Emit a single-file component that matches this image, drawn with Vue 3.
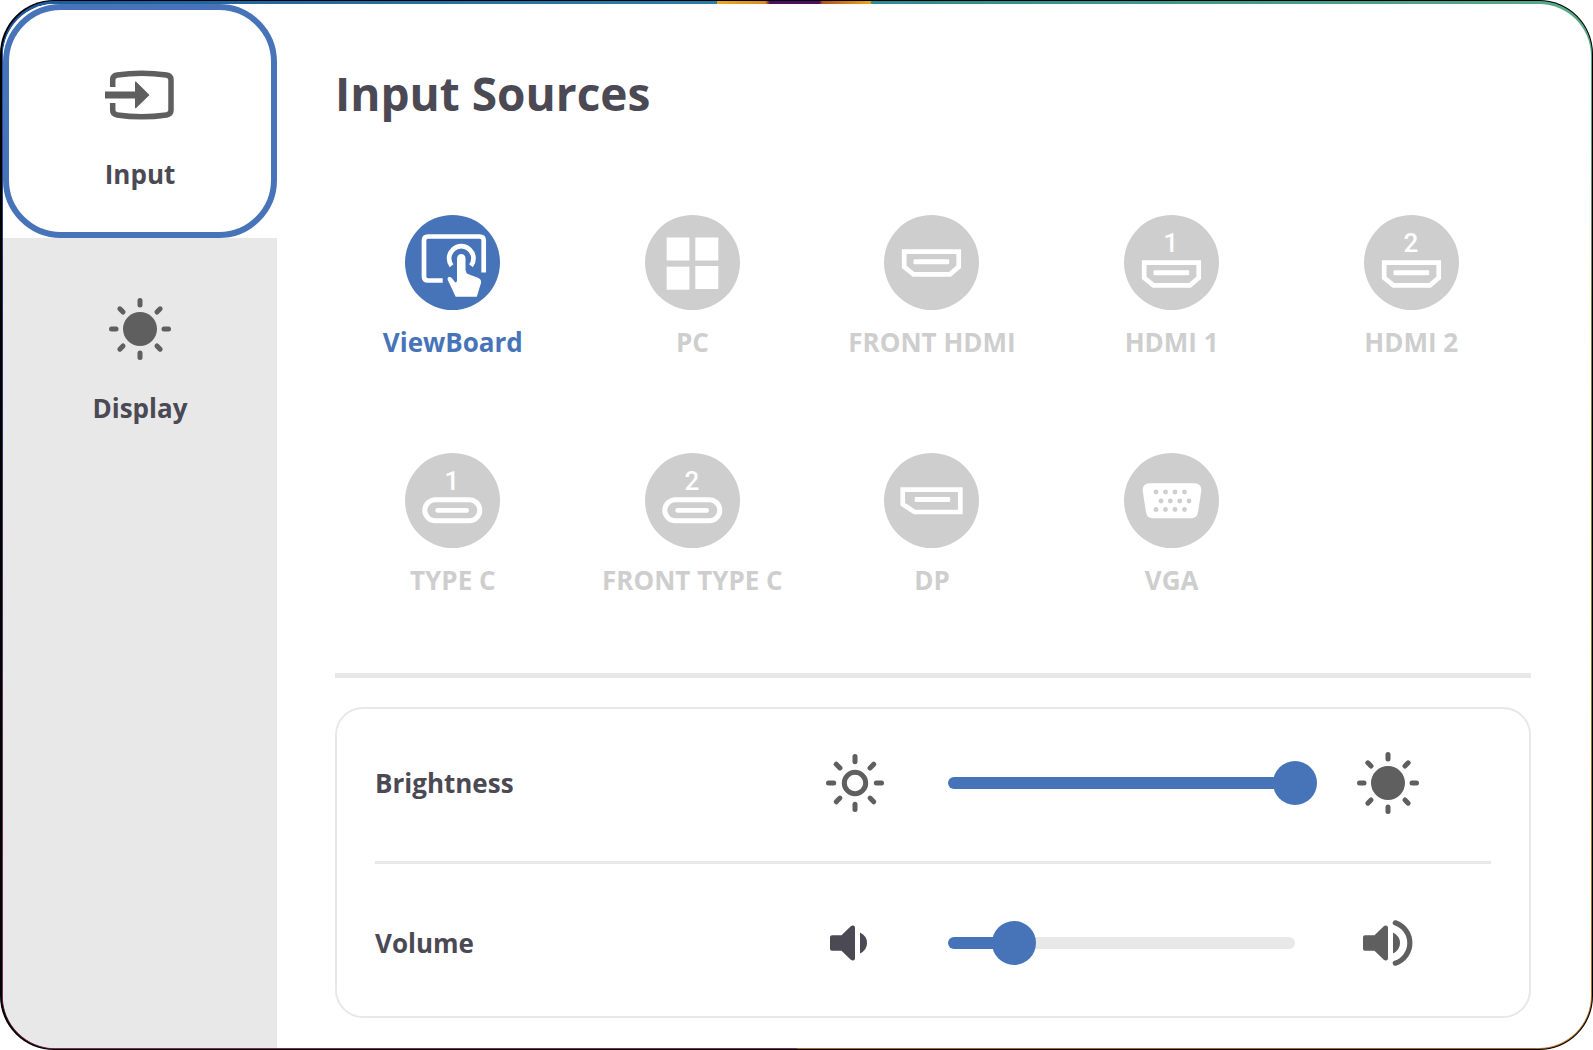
<script setup>
import { ref } from 'vue'

const tabs = [
  { id: 'input', label: 'Input' },
  { id: 'display', label: 'Display' },
]
const activeTab = ref('input')

const sources = [
  { label: 'ViewBoard', icon: 'touch' },
  { label: 'PC', icon: 'pc' },
  { label: 'FRONT HDMI', icon: 'hdmi' },
  { label: 'HDMI 1', icon: 'hdmi', digit: '1' },
  { label: 'HDMI 2', icon: 'hdmi', digit: '2' },
  { label: 'TYPE C', icon: 'usbc', digit: '1' },
  { label: 'FRONT TYPE C', icon: 'usbc', digit: '2' },
  { label: 'DP', icon: 'dp' },
  { label: 'VGA', icon: 'vga' },
]
const activeSource = ref('ViewBoard')

const brightness = ref(100)
const volume = ref(19)

const angles = [0, 45, 90, 135, 180, 225, 270, 315]
const pins = [
  [32, 39], [41.5, 39], [51, 39], [60.5, 39],
  [37, 48], [46.3, 48], [55.7, 48], [65, 48],
  [32, 56.5], [41.5, 56.5], [51, 56.5], [60.5, 56.5],
]
</script>

<template>
  <div class="bezel">
    <div class="wallpaper">
      <div class="panel">
        <nav class="sidebar">
          <div v-for="tab in tabs" :key="tab.id" class="slot" :class="{ current: activeTab === tab.id }">
            <button type="button" class="tab" @click="activeTab = tab.id">
              <svg v-if="tab.id === 'input'" class="tab-icon" viewBox="0 0 70 62" aria-hidden="true">
                <path d="M7.700 23V15.700q0-4 4.500-4.700Q36.500 7.300 61.500 11q4.500.7 4.500 4.700v30.600q0 4-4.500 4.700Q36.500 54.700 12.200 51q-4.500-.7-4.500-4.700V39" fill="none" stroke="#5f5f5f" stroke-width="5.500" />
                <path d="M0 27.500h30V18q.2-1 1.200-.3L44.500 31 31.200 44q-1 .7-1.200-.3v-9.200H0z" fill="#5f5f5f" />
              </svg>
              <svg v-else class="tab-icon" viewBox="0 0 62 62" aria-hidden="true">
                <circle cx="31" cy="31" r="17" fill="#5f5f5f" />
                <path v-for="a in angles" :key="a" d="M31 2.500v4.500" :transform="`rotate(${a} 31 31)`" stroke="#5f5f5f" stroke-width="5" stroke-linecap="round" />
              </svg>
              <span>{{ tab.label }}</span>
            </button>
          </div>
        </nav>

        <main class="content">
          <h1>Input Sources</h1>

          <div class="sources">
            <button
              v-for="s in sources"
              :key="s.label"
              type="button"
              class="source"
              :class="{ active: activeSource === s.label }"
              @click="activeSource = s.label"
            >
              <svg viewBox="0 0 95 95" aria-hidden="true">
                <circle cx="47.500" cy="47.500" r="47.500" fill="currentColor" />
                <text v-if="s.digit" x="47" y="37" text-anchor="middle" class="digit">{{ s.digit }}</text>
                <g v-if="s.icon === 'touch'">
                  <path d="M37.700 65.500H23q-4 0-4-4V25.500q0-4 4-4h51.700q4 0 4 4v32" fill="none" stroke="#fff" stroke-width="4.700" />
                  <path d="M46.600 50.800a12.200 12.200 0 1 1 19.400 0" fill="none" stroke="#fff" stroke-width="4.700" />
                  <path d="M52 65.500V43.500q.4-4.500 4.300-4.500t4.200 4.500V55q.2 3 3 4.200l9.500 3.500q3.500 1.500 3 5.300l-4.200 13.700H50.700L42.800 65q-.8-2.500 1.400-2.900 1.300-.2 3 1.400l2.600 3.500q1.700 1.300 2.200-1.500z" fill="#fff" />
                </g>
                <g v-else-if="s.icon === 'pc'" fill="#fff">
                  <rect x="21.700" y="22.500" width="22.700" height="23" />
                  <rect x="50.300" y="22.500" width="23" height="23" />
                  <rect x="21.700" y="51.700" width="22.700" height="23" />
                  <rect x="50.300" y="51" width="23" height="23" />
                </g>
                <g v-else-if="s.icon === 'hdmi'" :transform="s.digit ? 'translate(0 11)' : undefined">
                  <path d="M20.200 36.700h54.500v15.200L66 59.300H29.500l-9.300-7.400z" fill="none" stroke="#fff" stroke-width="4.700" />
                  <rect x="29.500" y="44.200" width="35.700" height="5" rx="1" fill="#fff" />
                </g>
                <g v-else-if="s.icon === 'usbc'">
                  <rect x="19.800" y="46.800" width="55" height="21" rx="10.500" fill="none" stroke="#fff" stroke-width="5" />
                  <rect x="30.300" y="55.100" width="33.700" height="4.700" rx="2.300" fill="#fff" />
                </g>
                <g v-else-if="s.icon === 'dp'">
                  <path d="M18.700 36.700h57.600V59H30.500l-11.800-7.700z" fill="none" stroke="#fff" stroke-width="4.700" />
                  <rect x="30.700" y="44" width="35.500" height="5" rx="1" fill="#fff" />
                </g>
                <g v-else>
                  <path d="M25.500 30.300h45q7.500.3 6.700 8L74 59.500q-1 5.500-6.500 5.800h-39q-5.500-.3-6.500-5.800l-3.200-21.200q-.8-7.700 6.700-8z" fill="#fff" />
                  <circle v-for="(p, i) in pins" :key="i" :cx="p[0]" :cy="p[1]" r="2.400" fill="currentColor" />
                </g>
              </svg>
              <span>{{ s.label }}</span>
            </button>
          </div>

          <hr class="divider" />

          <section class="card">
            <div class="row">
              <label for="brightness">Brightness</label>
              <svg class="level" viewBox="0 0 62 62" aria-hidden="true">
                <circle cx="31" cy="31" r="10.700" fill="none" stroke="#5f5f5f" stroke-width="5" />
                <path v-for="a in angles" :key="a" d="M31 4.500v5.200" :transform="`rotate(${a} 31 31)`" stroke="#5f5f5f" stroke-width="5" stroke-linecap="round" />
              </svg>
              <div class="track" :style="{ '--fill': brightness + '%' }">
                <input id="brightness" v-model.number="brightness" type="range" min="0" max="100" />
              </div>
              <svg class="level" viewBox="0 0 62 62" aria-hidden="true">
                <circle cx="31" cy="31" r="17" fill="#5f5f5f" />
                <path v-for="a in angles" :key="a" d="M31 2.500v4.500" :transform="`rotate(${a} 31 31)`" stroke="#5f5f5f" stroke-width="5" stroke-linecap="round" />
              </svg>
            </div>
            <hr class="rule" />
            <div class="row">
              <label for="volume">Volume</label>
              <svg class="level" viewBox="0 0 62 62" fill="#4a4954" aria-hidden="true">
                <path d="M8 23.200h9.500L26.800 14.300q1.200-1 2.500-.8 1.700.3 1.700 2v31q0 1.700-1.700 2-1.300.2-2.500-.8l-9.300-8.900H8q-2 0-2-2v-11.600q0-2 2-2z" />
                <path d="M36 20.500q7 3.500 7 10.500t-7 10.500z" />
              </svg>
              <div class="track" :style="{ '--fill': volume + '%' }">
                <input id="volume" v-model.number="volume" type="range" min="0" max="100" />
              </div>
              <svg class="level" viewBox="0 0 62 62" fill="#5f5f5f" aria-hidden="true">
                <path d="M8 23.200h9.500L26.800 14.300q1.200-1 2.500-.8 1.700.3 1.700 2v31q0 1.700-1.700 2-1.300.2-2.500-.8l-9.300-8.900H8q-2 0-2-2v-11.600q0-2 2-2z" />
                <path d="M36 20.500q7 3.500 7 10.500t-7 10.500z" />
                <path d="M38.300 10.800a21.300 21.300 0 0 1 0 40.400" fill="none" stroke="#5f5f5f" stroke-width="5.200" stroke-linecap="round" />
              </svg>
            </div>
          </section>
        </main>
      </div>
    </div>
  </div>
</template>

<style>
body {
  margin: 0;
  background: #fff;
}
</style>

<style scoped>
.bezel {
  box-sizing: border-box;
  display: flex;
  min-height: 100vh;
  padding: 1px 1px 1px 2px;
  border-radius: 54px;
  background: #000;
  font-family: "Open Sans", "Noto Sans", sans-serif;
  font-size: 26px;
  font-weight: 700;
  line-height: 32px;
  color: #4a4954;
}

.wallpaper {
  flex: 1;
  display: flex;
  padding: 3px 1px 1px 1px;
  border-radius: 53px;
  background:
    linear-gradient(90deg, #1f5a9e, #2a7fa6 45%, #eaa71c 45%, #dc8a28 48%, #48105f 48.3%, #48105f 51.4%, #b5521f 51.6%, #eba320 54.6%, #2f8a93 54.7%, #55ab88) top / 100% 3px no-repeat,
    linear-gradient(#2259a0, #22356f 30%, #6d3054 80%, #7a3050) left / 50% 100% no-repeat,
    linear-gradient(#55ab88, #74803a 40%, #b06a24) right / 50% 100% no-repeat;
}

.panel {
  flex: 1;
  display: flex;
  overflow: hidden;
  border-radius: 52px;
  background: #fff;
}

.sidebar {
  flex: none;
  width: 274px;
  background: #e8e8e8;
}

.slot.current {
  background: #fff;
}

.tab {
  box-sizing: border-box;
  display: flex;
  flex-direction: column;
  align-items: center;
  gap: 32px;
  width: 100%;
  height: 234px;
  padding: 54px 0 0;
  border: 6px solid transparent;
  border-radius: 58px;
  background: none;
  font: inherit;
  color: inherit;
}

.current .tab {
  border-color: #4774b9;
}

.tab-icon {
  height: 62px;
}

.content {
  flex: 1;
  padding: 61px 60px 28px 58px;
}

h1 {
  margin: 0;
  font-size: 46px;
  line-height: 56px;
}

.sources {
  display: grid;
  grid-template-columns: repeat(5, 1fr);
  row-gap: 95px;
  margin: 94px 0 77px -2px;
}

.source {
  display: flex;
  flex-direction: column;
  align-items: center;
  gap: 16px;
  padding: 0;
  border: 0;
  background: none;
  font: inherit;
  color: #cecece;
  white-space: nowrap;
}

.source.active {
  color: #4774b9;
}

.source svg {
  width: 95px;
  height: 95px;
}

.digit {
  font-family: Roboto, "Open Sans", sans-serif;
  font-size: 26px;
  font-weight: 500;
  fill: #fff;
}

hr {
  border: 0;
  background: #e8e8e8;
}

.divider {
  height: 5px;
  margin: 0 0 29px;
}

.card {
  padding: 0 38px;
  border: 2px solid #e8e8e8;
  border-radius: 28px;
}

.row {
  display: flex;
  align-items: center;
  gap: 62px;
  height: 147px;
  padding-right: 72px;
}

.row label {
  flex: 19 1 0;
}

.rule {
  height: 3px;
  margin: 5px 0;
}

.level {
  flex: none;
  width: 62px;
  height: 62px;
}

.track {
  flex: 17 1 0;
  display: flex;
  align-items: center;
  height: 12px;
  border-radius: 6px;
  background: linear-gradient(90deg, #4774b9 var(--fill), #e8e8e8 var(--fill));
}

.track input {
  flex: 1;
  height: 44px;
  margin: 0 -22px;
  appearance: none;
  background: none;
}

.track input::-webkit-slider-thumb {
  width: 44px;
  height: 44px;
  appearance: none;
  border-radius: 50%;
  background: #4774b9;
}
</style>
